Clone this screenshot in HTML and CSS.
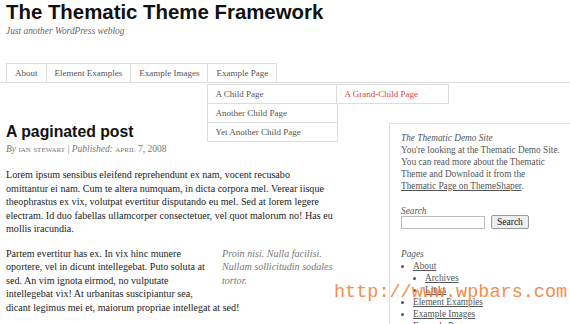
FILE: index.html
```html
<!DOCTYPE html>
<html>
<head>
<meta charset="utf-8">
<link rel="stylesheet" href="styles.css">
</head>
<body>
<div class="page">
  <header class="header">
    <h1 class="title">The Thematic Theme Framework</h1>
    <div class="tagline">Just another WordPress weblog</div>
  </header>
  <nav class="nav">
    <ul class="menu">
      <li class="tab">About</li>
      <li class="tab">Element Examples</li>
      <li class="tab">Example Images</li>
      <li class="tab has-sub">Example Page
        <ul class="sub">
          <li class="sub-item has-sub">A Child Page
            <ul class="sub sub2">
              <li class="sub-item grand">A Grand-Child Page</li>
            </ul>
          </li>
          <li class="sub-item">Another Child Page</li>
          <li class="sub-item">Yet Another Child Page</li>
        </ul>
      </li>
    </ul>
  </nav>
  <div class="main">
    <article class="content">
      <h2 class="post-title">A paginated post</h2>
      <div class="byline"><em>By</em> <span class="sc">Ian Stewart</span> | <em>Published:</em> <span class="sc">April 7, 2008</span></div>
      <p class="para">Lorem ipsum sensibus eleifend reprehendunt ex nam, vocent recusabo<br>omittantur ei nam. Cum te altera numquam, in dicta corpora mel. Verear iisque<br>theophrastus ex vix, volutpat evertitur disputando eu mel. Sed at lorem legere<br>electram. Id duo fabellas ullamcorper consectetuer, vel quot malorum no! Has eu<br>mollis iracundia.</p>
      <p class="para"><span class="pull">Proin nisi. Nulla facilisi. Nullam sollicitudin sodales tortor.</span>Partem evertitur has ex. In vix hinc munere<br>oportere, vel in dicunt intellegebat. Puto soluta at<br>sed. An vim ignota eirmod, no vulputate<br>intellegebat vix! At urbanitas suscipiantur sea,<br>dicant legimus mei et, maiorum propriae intellegat at sed!</p>
    </article>
    <aside class="sidebar">
      <div class="widget">
        <div class="w-title">The Thematic Demo Site</div>
        <div class="w-text">You're looking at the Thematic Demo Site. You can read more about the Thematic Theme and Download it from the <a class="link">Thematic Page on ThemeShaper</a>.</div>
      </div>
      <div class="widget widget-search">
        <div class="w-title">Search</div>
        <div class="search"><span class="input"></span><span class="btn">Search</span></div>
      </div>
      <div class="widget">
        <div class="w-title">Pages</div>
        <ul class="pages">
          <li><a class="link">About</a>
            <ul class="pages">
              <li><a class="link">Archives</a></li>
              <li><a class="link">Links</a></li>
            </ul>
          </li>
          <li><a class="link">Element Examples</a></li>
          <li><a class="link">Example Images</a></li>
          <li><a class="link">Example Page</a></li>
        </ul>
      </div>
    </aside>
  </div>
</div>
<div class="watermark">http://www.wpbars.com</div>
</body>
</html>
```
FILE: styles.css
```css
html, body { margin: 0; padding: 0; background: #fff; overflow: hidden; }
body { width: 570px; height: 324px; position: relative; font-family: "Liberation Serif", serif; color: #333; }
ul { margin: 0; padding: 0; list-style: none; }
.header { padding: 2px 0 0 6px; height: 60px; box-sizing: border-box; }
.title { margin: 0; font-family: "Liberation Sans", Arial, sans-serif; font-weight: bold; font-size: 20.4px; line-height: 20px; color: #111; }
.tagline { font-style: italic; font-size: 9.4px; color: #666; margin-top: 4px; }
.nav { border-bottom: 1px solid #ddd; height: 83px; box-sizing: border-box; margin-top: -60px; padding-top: 63px; position: relative; z-index: 2; }
.menu { display: flex; padding-left: 6px; height: 20px; }
.tab { position: relative; border: 1px solid #ddd; border-bottom: none; border-left: none; padding: 0 8px; font-size: 9px; line-height: 19px; color: #555; height: 20px; box-sizing: border-box; }
.tab:first-child { border-left: 1px solid #ddd; }
.sub { position: absolute; left: -1px; top: 20px; width: 129px; background: #fff; border: 1px solid #ddd; border-bottom: none; }
.sub-item { position: relative; height: 19px; line-height: 18px; padding-left: 7px; border-bottom: 1px solid #ddd; box-sizing: border-box; font-size: 9px; color: #555; }
.sub2 { left: 128px; top: -1px; width: 111px; }
.grand { color: #e0453a; }
.main { display: flex; }
.content { width: 345px; padding-left: 6px; box-sizing: border-box; flex: none; }
.post-title { margin: 40px 0 0; font-family: "Liberation Sans", Arial, sans-serif; font-weight: bold; font-size: 15.8px; line-height: 18px; color: #111; }
.byline { font-size: 9.5px; color: #777; margin-top: 3px; }
.sc { font-variant: small-caps; text-transform: lowercase; }
.para { margin: 14px 0 0; font-size: 10.1px; line-height: 13.5px; color: #222; }
.para + .para { margin-top: 11px; }
.pull { float: right; width: 123px; margin-left: 10px; font-style: italic; color: #777; margin-bottom: 8px; }
.sidebar { margin-left: 44px; margin-top: 40px; border: 1px solid #ddd; border-right: none; flex: 1; padding: 8px 0 0 11px; height: 300px; font-size: 9.3px; line-height: 12px; color: #555; }
.widget { margin-bottom: 13px; width: 160px; }
.widget-search { margin-bottom: 19px; }
.w-title { font-style: italic; color: #555; }
.link { text-decoration: underline; color: #555; }
.search { display: flex; align-items: center; gap: 6px; margin-top: -2px; }
.input { width: 84px; height: 13px; border: 1px solid #bbb; box-sizing: border-box; }
.btn { border: 1px solid #999; border-radius: 2px; background: #eee; font-size: 9.5px; line-height: 12px; padding: 0 5px; color: #111; }
.pages { padding-left: 12px; list-style: disc; }
.pages .pages { padding-left: 12px; }
.watermark { position: absolute; left: 334px; top: 282px; font-family: "Liberation Mono", monospace; font-size: 18.5px; color: #f07a30; opacity: 0.85; white-space: nowrap; }
```
